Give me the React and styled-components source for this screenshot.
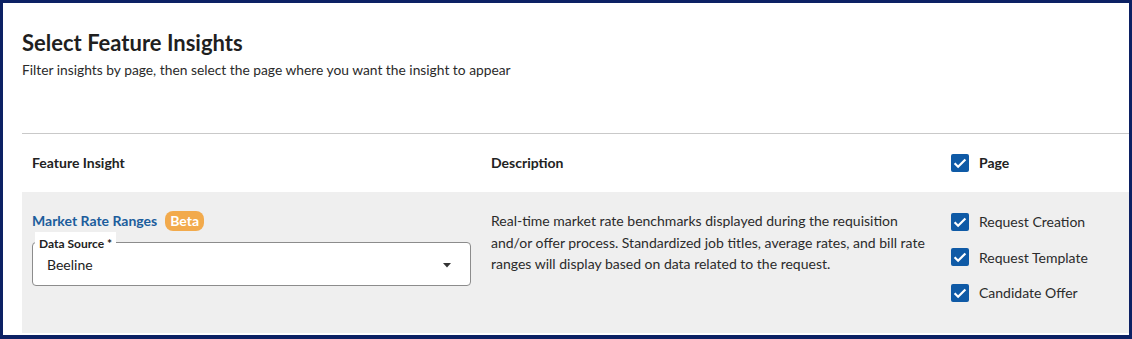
import React from 'react'
import styled, { createGlobalStyle } from 'styled-components'

const GlobalStyle = createGlobalStyle`
  html, body {
    margin: 0;
    padding: 0;
    background: #ffffff;
  }
  body {
    font-family: Lato, "Open Sans", "Liberation Sans", sans-serif;
    color: #222222;
  }
`

const Frame = styled.div`
  width: 1132px;
  height: 339px;
  box-sizing: border-box;
  border: 3px solid #0c2164;
  border-bottom-width: 4px;
  padding: 0 0 0 19px;
  overflow: hidden;
  background: #ffffff;
`

const Header = styled.header`
  padding-top: 26px;
`

const Title = styled.h1`
  margin: 0;
  font-size: 22px;
  line-height: 28px;
  font-weight: 700;
  color: #1f1f1f;
`

const Subtitle = styled.p`
  margin: 3px 0 0;
  font-size: 13.8px;
  line-height: 20px;
  color: #2a2a2a;
`

const Table = styled.div`
  margin-top: 53px;
  border-top: 1px solid #c9c9c9;
`

const Row = styled.div`
  display: grid;
  grid-template-columns: 459px 460px 1fr;
  background: ${p => (p.$shaded ? '#efefef' : '#ffffff')};
  height: ${p => p.$height}px;
  align-items: ${p => (p.$shaded ? 'start' : 'center')};
  box-sizing: border-box;
  padding-top: ${p => (p.$shaded ? 18 : 0)}px;
`

const Cell = styled.div`
  padding: 0 10px;
  font-size: 14px;
  line-height: 21.5px;
  color: #2b2b2b;
`

const HeadCell = styled(Cell)`
  font-weight: 700;
  color: #222222;
  display: flex;
  align-items: center;
  gap: 10px;
`

const NameLine = styled.div`
  display: flex;
  align-items: center;
  gap: 8px;
  height: 22px;
`

const InsightLink = styled.a`
  color: #1c5d9c;
  font-weight: 700;
  text-decoration: none;
`

const Badge = styled.span`
  display: inline-flex;
  align-items: center;
  justify-content: center;
  height: 20px;
  padding: 0 5px;
  border-radius: 8px;
  background: #f2aa4c;
  color: #ffffff;
  font-weight: 700;
  font-size: 14px;
  line-height: 20px;
`

const Field = styled.div`
  position: relative;
  margin-top: 10px;
  width: 439px;
`

const FieldLabel = styled.label`
  position: absolute;
  left: 3px;
  top: -10px;
  padding: 4px 4px 0;
  background: #ffffff;
  font-size: 12px;
  line-height: 16px;
  font-weight: 700;
  color: #222222;
`

const SelectBox = styled.div`
  box-sizing: border-box;
  height: 44px;
  border: 1px solid #8c8c8c;
  border-radius: 4px;
  background: #ffffff;
  display: flex;
  align-items: center;
  justify-content: space-between;
  padding: 2px 19px 0 14px;
  font-size: 14px;
  color: #222222;
`

const CheckList = styled.div`
  display: flex;
  flex-direction: column;
  gap: 14px;
  padding-top: 1px;
`

const CheckItem = styled.label`
  display: flex;
  align-items: center;
  gap: 10px;
  font-size: 14px;
  line-height: 21.5px;
  color: #2b2b2b;
`

const Box = styled.svg`
  flex: none;
  display: block;
`

function CheckBox() {
  return (
    <Box width="18" height="18" viewBox="0 0 18 18">
      <rect x="0" y="0" width="18" height="18" rx="2" fill="#0f5aa6" />
      <path d="M3.6 9.3 L7.1 12.8 L14.4 5.4" fill="none" stroke="#ffffff" strokeWidth="2.2" />
    </Box>
  )
}

function Arrow() {
  return (
    <svg width="8" height="5" viewBox="0 0 8 5">
      <path d="M0 0 L8 0 L4 4.5 Z" fill="#333333" />
    </svg>
  )
}

const pages = ['Request Creation', 'Request Template', 'Candidate Offer']

export default function App() {
  return (
    <>
      <GlobalStyle />
      <Frame>
        <Header>
          <Title>Select Feature Insights</Title>
          <Subtitle>Filter insights by page, then select the page where you want the insight to appear</Subtitle>
        </Header>
        <Table>
          <Row $height={58}>
            <HeadCell>Feature Insight</HeadCell>
            <HeadCell>Description</HeadCell>
            <HeadCell>
              <CheckBox />
              Page
            </HeadCell>
          </Row>
          <Row $shaded $height={141}>
            <Cell>
              <NameLine>
                <InsightLink href="#">Market Rate Ranges</InsightLink>
                <Badge>Beta</Badge>
              </NameLine>
              <Field>
                <FieldLabel>Data Source *</FieldLabel>
                <SelectBox>
                  <span>Beeline</span>
                  <Arrow />
                </SelectBox>
              </Field>
            </Cell>
            <Cell>
              Real-time market rate benchmarks displayed during the requisition and/or offer process.
              Standardized job titles, average rates, and bill rate ranges will display based on data
              related to the request.
            </Cell>
            <Cell>
              <CheckList>
                {pages.map(p => (
                  <CheckItem key={p}>
                    <CheckBox />
                    {p}
                  </CheckItem>
                ))}
              </CheckList>
            </Cell>
          </Row>
        </Table>
      </Frame>
    </>
  )
}
